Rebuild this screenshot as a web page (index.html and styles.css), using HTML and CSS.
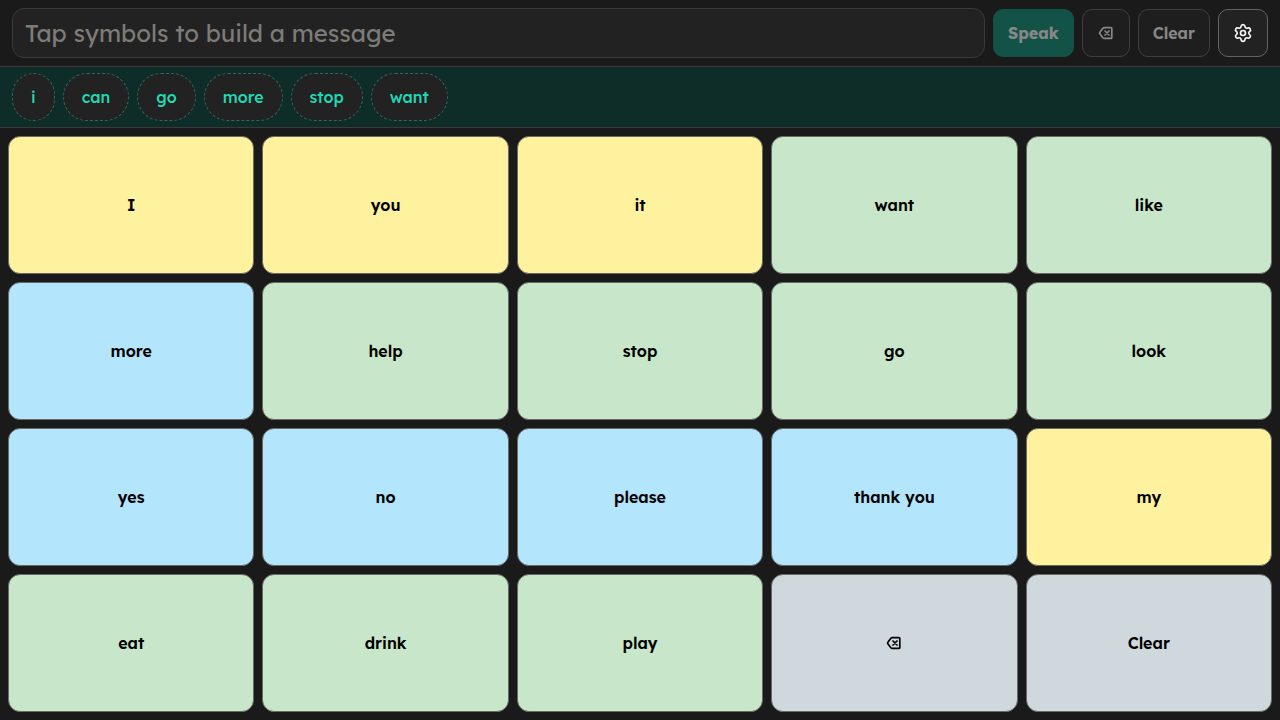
FILE: index.html
```html
<!DOCTYPE html>
<html lang="en">
<head>
  <meta charset="UTF-8">
  <meta name="viewport" content="width=device-width, initial-scale=1.0">
  <title>Talk board</title>
  <link rel="stylesheet" href="styles.css">
</head>
<body>

<header class="topbar">
  <input class="message" type="text" aria-label="Message" placeholder="Tap symbols to build a message" readonly>
  <button class="btn speak" type="button" disabled>Speak</button>
  <button class="btn" type="button" aria-label="Delete last word" disabled>
    <svg class="icon-delete" viewBox="0 0 16 16"><path d="M6.4 2.6h6.4a1 1 0 0 1 1 1v8.8a1 1 0 0 1-1 1H6.4a2 2 0 0 1-1.5-.7L2.2 9.2a1.8 1.8 0 0 1 0-2.4l2.7-3.5A2 2 0 0 1 6.4 2.6z"/><path d="M7 6l4 4M11 6l-4 4"/></svg>
  </button>
  <button class="btn" type="button" disabled>Clear</button>
  <button class="btn settings" type="button" aria-label="Settings">
    <svg class="icon-settings" viewBox="0 0 24 24"><path d="M9.671 4.136a2.34 2.34 0 0 1 4.659 0 2.34 2.34 0 0 0 3.319 1.915 2.34 2.34 0 0 1 2.33 4.033 2.34 2.34 0 0 0 0 3.831 2.34 2.34 0 0 1-2.33 4.033 2.34 2.34 0 0 0-3.319 1.915 2.34 2.34 0 0 1-4.659 0 2.34 2.34 0 0 0-3.32-1.915 2.34 2.34 0 0 1-2.33-4.033 2.34 2.34 0 0 0 0-3.831A2.34 2.34 0 0 1 6.35 6.051a2.34 2.34 0 0 0 3.319-1.915"/><circle cx="12" cy="12" r="3"/></svg>
  </button>
</header>

<nav class="predictions" aria-label="Suggested words">
  <button class="chip" type="button">i</button>
  <button class="chip" type="button">can</button>
  <button class="chip" type="button">go</button>
  <button class="chip" type="button">more</button>
  <button class="chip" type="button">stop</button>
  <button class="chip" type="button">want</button>
</nav>

<main class="board">
  <button class="tile pronoun" type="button">I</button>
  <button class="tile pronoun" type="button">you</button>
  <button class="tile pronoun" type="button">it</button>
  <button class="tile verb" type="button">want</button>
  <button class="tile verb" type="button">like</button>

  <button class="tile social" type="button">more</button>
  <button class="tile verb" type="button">help</button>
  <button class="tile verb" type="button">stop</button>
  <button class="tile verb" type="button">go</button>
  <button class="tile verb" type="button">look</button>

  <button class="tile social" type="button">yes</button>
  <button class="tile social" type="button">no</button>
  <button class="tile social" type="button">please</button>
  <button class="tile social" type="button">thank you</button>
  <button class="tile pronoun" type="button">my</button>

  <button class="tile verb" type="button">eat</button>
  <button class="tile verb" type="button">drink</button>
  <button class="tile verb" type="button">play</button>
  <button class="tile action" type="button" aria-label="Delete last word">
    <svg class="icon-delete" viewBox="0 0 16 16"><path d="M6.4 2.6h6.4a1 1 0 0 1 1 1v8.8a1 1 0 0 1-1 1H6.4a2 2 0 0 1-1.5-.7L2.2 9.2a1.8 1.8 0 0 1 0-2.4l2.7-3.5A2 2 0 0 1 6.4 2.6z"/><path d="M7 6l4 4M11 6l-4 4"/></svg>
  </button>
  <button class="tile action" type="button">Clear</button>
</main>

</body>
</html>
```
FILE: styles.css
```css
:root {
  --bg: #1a1a1a;
  --surface: #222222;
  --line: #3a3a3a;
  --accent: #1fd9b5;
  --pronoun: #fff29e;
  --verb: #c8e6c9;
  --social: #b3e5fc;
  --action: #cfd8dc;
}
* {
  box-sizing: border-box;
}
body {
  margin: 0;
  min-height: 100vh;
  display: flex;
  flex-direction: column;
  background: var(--bg);
  color: #f5f5f5;
  font-family: Lexend, Inter, sans-serif;
  /* single-storey a, capital I with serifs */
  font-feature-settings: "cv11", "cv08";
}
button, input {
  font: inherit;
  font-feature-settings: inherit;
  color: inherit;
}
button {
  display: flex;
  align-items: center;
  justify-content: center;
  cursor: pointer;
}
svg {
  fill: none;
  stroke: currentColor;
  stroke-linecap: round;
  stroke-linejoin: round;
}

/* message bar */
.topbar {
  display: flex;
  align-items: center;
  gap: 8px;
  padding: 8px 12px;
  border-bottom: 1px solid var(--line);
}
.message {
  flex: 1;
  min-width: 0;
  height: 50px;
  padding: 0 12px;
  border: 1px solid var(--line);
  border-radius: 12px;
  background: var(--surface);
  font-size: 24px;
}
.message::placeholder {
  color: #7d7b78;
  opacity: 1;
}
.btn {
  min-width: 48px;
  height: 48px;
  padding: 0 14px;
  border: 1px solid #64645f;
  border-radius: 10px;
  background: var(--surface);
  font-size: 16px;
  font-weight: 600;
}
.btn:disabled {
  opacity: 0.5;
  cursor: default;
}
.speak {
  border-color: #0d8a75;
  background: #0d8a75;
  font-weight: 700;
}
.settings {
  width: 50px;
}

/* word predictions */
.predictions {
  display: flex;
  gap: 8px;
  padding: 6px 12px;
  border-bottom: 1px solid var(--line);
  background: #0e2d28;
}
.chip {
  height: 48px;
  padding: 0 18px;
  border: 1px dashed #2c6b5e;
  border-radius: 24px;
  background: var(--surface);
  color: var(--accent);
  font-size: 16px;
  font-weight: 500;
}

/* symbol grid */
.board {
  flex: 1;
  display: grid;
  grid-template-columns: repeat(5, 1fr);
  grid-auto-rows: 1fr;
  gap: 8px;
  padding: 8px;
}
.tile {
  padding: 8px;
  border: 1px solid #6a6a64;
  border-radius: 12px;
  color: #000000;
  font-size: 16px;
  font-weight: 600;
}
.pronoun { background: var(--pronoun); }
.verb { background: var(--verb); }
.social { background: var(--social); }
.action { background: var(--action); }

.icon-delete {
  width: 16px;
  height: 16px;
  stroke-width: 1.7;
}
.icon-settings {
  width: 20px;
  height: 20px;
  stroke-width: 2;
}
```
